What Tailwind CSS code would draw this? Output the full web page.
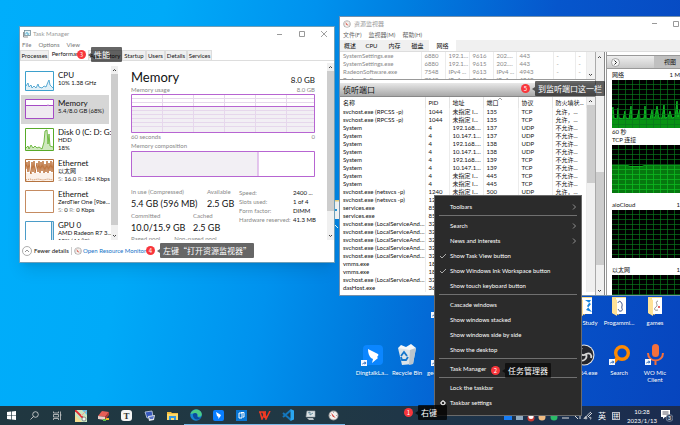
<!DOCTYPE html>
<html lang="en">
<head>
  <meta charset="UTF-8" />
  <meta name="viewport" content="width=device-width, initial-scale=1.0" />
  <title>Desktop</title>
  <script src="https://cdn.jsdelivr.net/npm/@tailwindcss/browser@4"></script>
</head>
<body class="relative h-screen overflow-hidden bg-[linear-gradient(100deg,#00aefb_0%,#00aaf8_22%,#0092ee_42%,#007ee0_54%,#0656cc_74%,#0745be_100%)] font-['Lato','Noto_Sans_CJK_SC',sans-serif] text-[6px] leading-[8px] text-[#111]">

  <!-- shared drawings -->
  <svg class="absolute size-0" aria-hidden="true">
    <defs>
      <pattern id="grid" width="7" height="5" patternUnits="userSpaceOnUse"><path d="M6.5 0V5M0 4.5H7" stroke="#08751b" stroke-width=".7" fill="none"/></pattern>
      <g id="shortcut"><rect width="6" height="6" fill="#f4f8ff"/><path d="M1.3 5C1.3 3 2.3 2.4 3.6 2.4V1.2L5.4 3 3.6 4.7V3.6C2.6 3.6 2 4 1.3 5Z" fill="#2465b8"/></g>
      <g id="gauge"><circle cx="5" cy="5" r="4.5" fill="#9b9b9b"/><circle cx="5" cy="5" r="3.6" fill="#f5f1ee"/><path d="M2.8 2.6 7 7.3 4.3 6Z" fill="#d22a20"/><path d="M5 1.6V2.6M8.2 5H7.3M2 5H2.8" stroke="#777" stroke-width=".6"/></g>
      <g id="folder"><path d="M1 1H7L8 3V19L1 17Z" fill="#e8bd55"/><path d="M2 1H15V18H2Z" fill="#f8dc88"/><path d="M5 2H15V18H5Z" fill="#fff"/><path d="M1 1 6 4V20L1 17Z" fill="#ffe297"/></g>
    </defs>
  </svg>

  <!-- desktop icons -->
  <a href="#" class="absolute left-[353px] top-[344px] flex w-[38px] flex-col items-center gap-[3px] text-white text-shadow-sm">
    <svg class="h-[22px] w-[24px]" viewBox="0 0 24 22"><rect x="3" y="1" width="20" height="20" rx="4" fill="#0b86ff"/><path d="M8 5 18 10C19 11 18 12 17 13L18 14 12 19 13 15 11 14C9 12 8 9 8 5Z" fill="#fff"/><use href="#shortcut" x="1" y="16"/></svg>
    <span>DingtalkLa...</span>
  </a>
  <a href="#" class="absolute left-[388px] top-[344px] flex w-[38px] flex-col items-center gap-[3px] text-white text-shadow-sm">
    <svg class="h-[22px] w-[20px]" viewBox="0 0 20 22"><path d="M1 4 19 4 16 20 5 21Z" fill="#dbe3e8"/><path d="M1 4 4 1 9 3 14 0 19 4 13 6Z" fill="#f4f7f9"/><path d="M13 6 19 4 16 20 12 21Z" fill="#b9c5cd"/><path d="M4 12 7 8 10 12M11 13 9 16H5L4 13" stroke="#1676cc" stroke-width="1.8" fill="none"/></svg>
    <span class="whitespace-nowrap">Recycle Bin</span>
  </a>
  <a href="#" aria-label="geek" class="absolute left-[427px] top-[312px] flex flex-col gap-[42px] text-white text-shadow-sm">
    <svg class="h-[6px] w-[10px]" viewBox="0 0 10 6"><use href="#shortcut" x="4"/></svg>
    <svg class="h-[6px] w-[10px]" viewBox="0 0 10 6"><use href="#shortcut" x="4"/></svg>
  </a>
  <span class="absolute left-[427px] top-[369px] text-white text-shadow-sm">geek</span>
  <a href="#" class="absolute left-[566px] top-[296px] flex w-[38px] flex-col items-center gap-[3px] text-white text-shadow-sm">
    <svg class="h-[20px] w-[16px]" viewBox="0 0 16 20"><use href="#folder"/><path d="M8 4 14 8 9 14 15 16 10 10 14 4Z" fill="#1685df"/></svg>
    <span class="whitespace-nowrap">My Study</span>
  </a>
  <a href="#" class="absolute left-[600px] top-[296px] flex w-[38px] flex-col items-center gap-[3px] text-white text-shadow-sm">
    <svg class="h-[20px] w-[16px]" viewBox="0 0 16 20"><use href="#folder"/><path d="M7 7C8 3 12 7 11 10S13 14 10 15 8 12 7 14" stroke="#3b5288" fill="none"/></svg>
    <span>Progammi...</span>
  </a>
  <a href="#" class="absolute left-[636px] top-[296px] flex w-[38px] flex-col items-center gap-[3px] text-white text-shadow-sm">
    <svg class="h-[20px] w-[16px]" viewBox="0 0 16 20"><use href="#folder"/><path d="M11 5C7 6 12 9 9 11S8 15 11 14" stroke="#777" stroke-width=".8" fill="none"/><circle cx="12" cy="11" r="1" fill="#d33"/></svg>
    <span>games</span>
  </a>
  <a href="#" class="absolute left-[565px] top-[344px] flex w-[38px] flex-col items-center gap-[3px] text-white text-shadow-sm">
    <svg class="h-[22px] w-[22px]" viewBox="0 0 22 22"><circle cx="11" cy="11" r="10.5" fill="#e7e7e7"/><circle cx="11" cy="11" r="9.4" fill="#24252b"/><path d="M9 4C5 9 9 13 13 10C17 8 19 11 18 14M13 10C15 15 10 18 6 16" stroke="#d5d5d5" stroke-width="1.8" fill="none"/></svg>
    <span class="whitespace-nowrap">obs64.exe</span>
  </a>
  <a href="#" class="absolute left-[600px] top-[344px] flex w-[38px] flex-col items-center gap-[3px] text-white text-shadow-sm">
    <svg class="h-[22px] w-[24px]" viewBox="0 0 24 22"><circle cx="15" cy="9" r="6.3" stroke="#ff8a00" stroke-width="3.4" fill="none"/><path d="M10.5 14 5 20" stroke="#ff8a00" stroke-width="3.6"/><use href="#shortcut" x="2" y="15"/></svg>
    <span>Search</span>
  </a>
  <a href="#" class="absolute left-[636px] top-[344px] flex w-[38px] flex-col items-center gap-[3px] text-center leading-[7px] text-white text-shadow-sm">
    <svg class="h-[22px] w-[24px]" viewBox="0 0 24 22"><rect x="9" y="0" width="7" height="13" rx="3.5" fill="#f4703c"/><path d="M5 9C5 19 20 19 20 9M12.5 16V21" stroke="#f4703c" stroke-width="2" fill="none"/><use href="#shortcut" x="2" y="15"/></svg>
    <span>WO Mic<br />Client</span>
  </a>
  <svg class="absolute left-[328px] top-[200px] h-[32px] w-[16px]" viewBox="0 0 16 32"><path d="M0 0H12V19H0Z" fill="#f5f7f8"/><path d="M0 0H12V1.500H0Z" fill="#ead27d"/><path d="M7 10H9" stroke="#259ade" stroke-width="2"/><path d="M7 25 10 28" stroke="#dff"/></svg>

  <!-- task manager -->
  <section class="absolute left-[19px] top-[26px] flex h-[237px] w-[316px] flex-col border border-[#6f9fb8] bg-white shadow-lg">
    <header class="flex h-[14px] items-center gap-[2px] pl-[3px] text-[#999]">
      <svg class="size-[8px]" viewBox="0 0 8 8"><rect x="1.500" y=".5" width="6" height="5" fill="#e5f4f8" stroke="#74909a" stroke-width=".8"/><path d="M.5 2V7H5" stroke="#777" stroke-width=".8" fill="none"/><path d="M2 4H3L4 2 5 5 6 3" stroke="#3aa1c8" stroke-width=".6" fill="none"/></svg>
      <h1 class="grow">Task Manager</h1>
      <button aria-label="Minimize" class="w-[20px]"><svg class="mx-auto size-[6px]" viewBox="0 0 6 6"><path d="M0 3.500H5" stroke="#999"/></svg></button>
      <button aria-label="Maximize" class="w-[20px]"><svg class="mx-auto size-[6px]" viewBox="0 0 6 6"><path d="M.5.5H5.500V5.500H.5Z" stroke="#999" fill="none"/></svg></button>
      <button aria-label="Close" class="w-[20px]"><svg class="mx-auto size-[6px]" viewBox="0 0 6 6"><path d="M0 0 6 6M6 0 0 6" stroke="#888" stroke-width=".8"/></svg></button>
    </header>
    <nav class="flex h-[9px] shrink-0 gap-[7px] pl-[2px] text-[#777]">
      <button>File</button><button>Options</button><button>View</button>
    </nav>
    <nav class="flex h-[12px] shrink-0 items-end border-b border-[#ddd] text-center">
      <button class="h-[10px] w-[29px] border border-b-0 border-[#ddd] bg-[#f0f0f0]">Processes</button>
      <button class="h-[12px] w-[39px] bg-white">Performance</button>
      <button class="h-[10px] w-[34px] border border-b-0 border-[#ddd] bg-[#f0f0f0]">App history</button>
      <button class="h-[10px] w-[24px] border border-b-0 border-[#ddd] bg-[#f0f0f0]">Startup</button>
      <button class="h-[10px] w-[19px] border border-b-0 border-[#ddd] bg-[#f0f0f0]">Users</button>
      <button class="h-[10px] w-[22px] border border-b-0 border-[#ddd] bg-[#f0f0f0]">Details</button>
      <button class="h-[10px] w-[25px] border border-b-0 border-[#ddd] bg-[#f0f0f0]">Services</button>
    </nav>

    <div class="flex min-h-0 grow">
      <aside class="flex w-[98px] shrink-0 overflow-hidden pt-[5px]">
        <ul class="w-[91px] overflow-hidden pt-[1px] pl-[1px] whitespace-nowrap">
          <li class="flex h-[28px] gap-[4px] pt-[4px] pl-[4px]">
            <svg class="h-[20px] w-[29px] shrink-0" viewBox="0 0 29 20"><path d="M1 19V15L3 13 4 16 6 14 7 17 9 15 11 17 13 13 14 16 17 17 19 15 21 16 23 11 24 9 25 14 28 17V19Z" fill="#e2f0f7"/><path d="M1 15 3 12 4 16 6 14 7 17 9 15 11 17 13 13 14 16 17 17 19 15 21 16 23 11 24 9 25 14 28 17" stroke="#4ba3cf" stroke-width=".9" fill="none"/><path d="M.5.5H28.500V19.500H.5Z" stroke="#3da0cc" fill="none"/></svg>
            <div><h2 class="text-[8px]">CPU</h2><p>10% 1.38 GHz</p></div>
          </li>
          <li class="mr-[2px] flex h-[29px] gap-[4px] bg-[#d6d6d6] pt-[4px] pl-[4px]">
            <svg class="h-[20px] w-[29px] shrink-0" viewBox="0 0 29 20"><path d="M.5.5H28.500V19.500H.5Z" fill="#fff"/><path d="M1 7H28V19H1Z" fill="#efeaf1"/><path d="M.5.5H28.500V19.500H.5ZM1 6.500H22L23 6 24 6.500H28" stroke="#a54bc5" fill="none"/></svg>
            <div><h2 class="text-[8px]">Memory</h2><p>5.4/8.0 GB (68%)</p></div>
          </li>
          <li class="flex h-[31px] gap-[4px] pt-[4px] pl-[4px]">
            <svg class="h-[23px] w-[29px] shrink-0" viewBox="0 0 29 23"><path d="M1 20 3 18 4 21 6 17 8 20 10 18 12 20 14 19 17 21 19 14 20 3 22 2 23 16 24 6 25 18 28 19V22H1Z" fill="#cfe8bf"/><path d="M1 20 3 18 4 21 6 17 8 20 10 18 12 20 14 19 17 21 19 14 20 3 22 2 23 16 24 6 25 18 28 19" stroke="#65b335" stroke-width=".9" fill="none"/><path d="M.5.5H28.500V22.500H.5Z" stroke="#58aa29" fill="none"/></svg>
            <div><h2 class="text-[8px]">Disk 0 (C: D: G: H:)</h2><p>HDD</p><p>18%</p></div>
          </li>
          <li class="flex h-[31px] gap-[4px] pt-[4px] pl-[4px]">
            <svg class="h-[23px] w-[29px] shrink-0" viewBox="0 0 29 23"><path d="M1 14H28V22H1Z" fill="#fbf1e9"/><path d="M1 10 2 3 3 13 4 2 5 12 6 15 7 3 8 13 9 2 10 14 12 4 13 13 14 2 15 14 16 3 17 12 18 2 19 14 20 5 21 13 22 2 23 14 24 4 25 12 26 2 27 13 28 3" stroke="#b5652a" stroke-width=".9" fill="none"/><path d="M1 21 5 20 8 21 13 20 18 21 23 20 28 21" stroke="#c98858" stroke-dasharray="1" fill="none"/><path d="M.5.5H28.500V22.500H.5Z" stroke="#b5733f" fill="none"/></svg>
            <div><h2 class="text-[8px]">Ethernet</h2><p>以太网</p><p><span class="text-[#999]">S:</span> 16.0 <span class="text-[#999]">R:</span> 184 Kbps</p></div>
          </li>
          <li class="flex h-[31px] gap-[4px] pt-[4px] pl-[4px]">
            <svg class="h-[23px] w-[29px] shrink-0" viewBox="0 0 29 23"><path d="M.5.5H28.500V22.500H.5Z" stroke="#c58b61" fill="none"/></svg>
            <div><h2 class="text-[8px]">Ethernet</h2><p>ZeroTier One [9be...</p><p><span class="text-[#999]">S:</span> 0 <span class="text-[#999]">R:</span> 0 Kbps</p></div>
          </li>
          <li class="flex h-[31px] gap-[4px] pt-[4px] pl-[4px]">
            <svg class="h-[23px] w-[29px] shrink-0" viewBox="0 0 29 23"><path d="M26 1H28V22H26Z" fill="#cfe3f0"/><path d="M.5.5H28.500V22.500H.5ZM26.500 1V22" stroke="#4b9cc8" fill="none"/></svg>
            <div><h2 class="text-[8px]">GPU 0</h2><p>AMD Radeon R7 3...</p><p>18% (44 °C)</p></div>
          </li>
        </ul>
        <div class="flex w-[7px] flex-col items-center bg-[#cdcdcd]">
          <svg class="h-[8px] w-[7px] bg-[#f0f0f0]" viewBox="0 0 7 8"><path d="M2 5 3.500 3.500 5 5" stroke="#444" fill="none"/></svg>
          <svg class="mt-auto h-[15px] w-[7px] bg-[#f0f0f0]" viewBox="0 0 7 15"><path d="M2 10 3.500 11.500 5 10" stroke="#444" fill="none"/></svg>
        </div>
      </aside>

      <main class="min-w-0 grow overflow-hidden pr-[12px] pl-[13px] whitespace-nowrap">
        <div class="flex items-end justify-between pt-[8px]">
          <h2 class="text-[13px] leading-[17px]">Memory</h2>
          <span class="text-[8px] leading-[12px]">8.0 GB</span>
        </div>
        <div class="flex justify-between text-[#888]"><span>Memory usage</span><span>8.0 GB</span></div>
        <svg class="h-[39px] w-full" viewBox="0 0 184 39" preserveAspectRatio="none">
          <path d="M0 12H184V39H0Z" fill="#f2eff4"/>
          <path d="M0 4.500H184M0 8.500H184M0 16.500H184M0 20.500H184M0 24.500H184M0 28.500H184M0 32.500H184M31.500 0V38M62.500 0V38M93.500 0V38M124.500 0V38M155.500 0V38" stroke="#e6d7ec"/>
          <path d="M.5.5H183.500V38.500H.5ZM0 12.500H184" stroke="#b765d2" fill="none"/>
        </svg>
        <div class="flex justify-between text-[#888]"><span>60 seconds</span><span>0</span></div>
        <p class="pt-[1px] pb-[1px] text-[#888]">Memory composition</p>
        <svg class="h-[26px] w-full" viewBox="0 0 184 26" preserveAspectRatio="none"><path d="M1 1H127V25H1Z" fill="#f2eff4"/><path d="M127 1V25" stroke="#dcb5e8" stroke-width="1.500"/><path d="M.5.5H183.500V25.500H.5Z" stroke="#b765d2" fill="none"/></svg>
        <div class="flex pt-[11px]">
          <div class="w-[108px] shrink-0">
            <dl class="flex">
              <div class="w-[76px]"><dt class="text-[#888]">In use (Compressed)</dt><dd class="h-[16px] text-[9px] leading-[15px]">5.4 GB (596 MB)</dd></div>
              <div><dt class="text-[#888]">Available</dt><dd class="text-[9px] leading-[15px]">2.5 GB</dd></div>
            </dl>
            <dl class="flex">
              <div class="w-[62px]"><dt class="text-[#888]">Committed</dt><dd class="h-[15px] text-[9px] leading-[15px]">10.0/15.9 GB</dd></div>
              <div><dt class="text-[#888]">Cached</dt><dd class="text-[9px] leading-[15px]">2.5 GB</dd></div>
            </dl>
            <dl class="flex gap-[14px] text-[#888]"><dt>Paged pool</dt><dt>Non-paged pool</dt></dl>
          </div>
          <dl class="grid grid-cols-[54px_auto] content-start leading-[9px]">
            <dt class="text-[#888]">Speed:</dt><dd>2400 ...</dd>
            <dt class="text-[#888]">Slots used:</dt><dd>1 of 4</dd>
            <dt class="text-[#888]">Form factor:</dt><dd>DIMM</dd>
            <dt class="text-[#888]">Hardware reserved:</dt><dd>41.3 MB</dd>
          </dl>
        </div>
      </main>
      <div class="mt-[2px] flex w-[7px] flex-col bg-[#cdcdcd]">
        <svg class="h-[8px] w-[7px] bg-[#f0f0f0]" viewBox="0 0 7 8"><path d="M2 5 3.500 3.500 5 5" stroke="#444" fill="none"/></svg>
        <svg class="mt-auto h-[29px] w-[7px] bg-[#f0f0f0]" viewBox="0 0 7 29"><path d="M2 24 3.500 25.500 5 24" stroke="#444" fill="none"/></svg>
      </div>
    </div>
    <footer class="flex h-[22px] shrink-0 items-center gap-[2px] pl-[2px]">
      <svg class="size-[10px]" viewBox="0 0 10 10"><circle cx="5" cy="5" r="4.500" stroke="#999" fill="none" stroke-width=".8"/><path d="M3 6 5 4 7 6" stroke="#777" fill="none" stroke-width=".8"/></svg>
      <button class="w-[35px] text-left whitespace-nowrap">Fewer details</button>
      <a href="#" class="flex items-center gap-[1px] border-l border-[#ccc] pl-[2px] text-[#1673c7]"><svg class="size-[8px]" viewBox="0 0 10 10"><use href="#gauge"/></svg>Open Resource Monitor</a>
    </footer>
  </section>

  <!-- resource monitor -->
  <section class="absolute top-[16px] right-0 left-[339px] flex h-[280px] flex-col overflow-hidden border border-r-0 border-[#7590ab] bg-white">
    <header class="flex h-[13px] shrink-0 items-center gap-[3px] pl-[3px] text-[#999]">
      <svg class="size-[8px]" viewBox="0 0 10 10"><use href="#gauge"/></svg>
      <h1 class="grow">资源监视器</h1>
      <button aria-label="Minimize" class="w-[18px]"><svg class="mx-auto size-[6px]" viewBox="0 0 6 6"><path d="M0 2.500H5" stroke="#999"/></svg></button>
      <button aria-label="Maximize" class="w-[13px]"><svg class="ml-[6px] size-[6px]" viewBox="0 0 6 6"><path d="M.5.5H5.500V5.500H.5Z" stroke="#999" fill="none"/></svg></button>
    </header>
    <nav class="flex h-[10px] shrink-0 gap-[7px] pl-[3px] text-[#666]">
      <button>文件(F)</button><button>监视器(M)</button><button>帮助(H)</button>
    </nav>
    <nav class="flex h-[12px] shrink-0 border-b border-[#ddd] bg-[#f0f0f0]">
      <button class="w-[20px]">概述</button><button class="w-[23px]">CPU</button><button class="w-[23px]">内存</button><button class="w-[23px]">磁盘</button><button class="w-[27px] bg-white">网络</button>
    </nav>

    <div class="flex min-h-0 grow">
      <div class="w-[256px] shrink-0 overflow-hidden border-r border-[#aaa]">
        <div class="flex h-[28px] overflow-hidden border-b border-[#999]">
          <table class="w-[247px] table-fixed self-start text-[#888]">
            <colgroup><col class="w-[81px]" /><col class="w-[24px]" /><col class="w-[24px]" /><col class="w-[24px]" /><col class="w-[23px]" /><col class="w-[37px]" /><col class="w-[22px]" /><col /></colgroup>
            <tbody id="conns"></tbody>
          </table>
          <div class="flex grow flex-col justify-end bg-[#f2f2f2]"><svg class="h-[8px] w-[7px]" viewBox="0 0 7 8"><path d="M2 3 3.500 4.500 5 3" stroke="#444" fill="none"/></svg></div>
        </div>
        <h2 class="mt-[3px] h-[14px] border-b border-[#888] bg-linear-to-b from-[#e8e8e8] to-[#a9a9a9] pl-[3px] text-[8px] leading-[14px]">侦听端口</h2>
        <div class="flex">
          <table class="w-[247px] table-fixed">
            <colgroup><col class="w-[85px]" /><col class="w-[24px]" /><col class="w-[34px]" /><col class="w-[35px]" /><col class="w-[34px]" /><col /></colgroup>
            <thead>
              <tr class="h-[11px] text-left *:border-r *:border-[#e4e4e4] *:pl-[3px] *:font-normal">
                <th>名称</th><th>PID</th><th>地址</th><th class="relative">端口<svg class="absolute top-0 left-[14px] size-[4px]" viewBox="0 0 4 4"><path d="M0 3 2 1 4 3" stroke="#777" stroke-width=".7" fill="none"/></svg></th><th>协议</th><th>防火墙状...</th>
              </tr>
            </thead>
            <tbody id="ports"></tbody>
          </table>
          <div class="flex grow flex-col bg-[#f0f0f0]">
            <svg class="h-[8px] w-[7px]" viewBox="0 0 7 8"><path d="M2 5 3.500 3.500 5 5" stroke="#444" fill="none"/></svg>
            <div class="h-[78px] bg-[#cdcdcd]"></div>
          </div>
        </div>
      </div>
      <div class="flex w-[9px] shrink-0 flex-col border-r border-[#888] bg-[#f0f0f0]">
        <svg class="mt-[1px] h-[8px] w-[7px]" viewBox="0 0 7 8"><path d="M2 5 3.500 3.500 5 5" stroke="#444" fill="none"/></svg>
        <div class="mt-[111px] h-[93px] bg-[#cdcdcd]"></div>
        <svg class="mt-auto h-[8px] w-[7px]" viewBox="0 0 7 8"><path d="M2 3 3.500 4.500 5 3" stroke="#444" fill="none"/></svg>
      </div>
      <aside class="ml-px min-w-0 grow overflow-hidden border-l border-[#999] pt-[3px]">
        <div class="flex h-[14px] items-center justify-between border-y border-[#999] bg-linear-to-b from-[#eee] to-[#c9c9c9] pl-[4px]">
          <button aria-label="Expand"><svg class="size-[9px]" viewBox="0 0 9 9"><circle cx="4.500" cy="4.500" r="4" fill="#f5f5f5" stroke="#888" stroke-width=".7"/><path d="M3.500 2.500 5.500 4.500 3.500 6.500" stroke="#222" fill="none"/></svg></button>
          <button class="h-[12px] w-[26px] bg-[#c0c0c0] pl-[6px]">视图</button>
        </div>
        <div class="pl-[5px] whitespace-nowrap">
          <div class="flex h-[11px] items-center justify-between"><h3>网络</h3><span>1 M</span></div>
          <svg class="h-[48px] w-full bg-black" viewBox="0 0 68 48" preserveAspectRatio="none"><path d="M0 48V30L1 27 2 38 5 39 6 28 7 38 11 39 13 31 14 38 17 39 19 26 20 39 25 38 27 30 28 39 32 38 33 26 34 38 38 39 40 30 41 38 43 37 45 26 47 38 50 38 52 25 53 38 56 37 58 31 60 38 63 37 65 21 66 37 68 29V48Z" fill="#079313"/><path d="M0 30 1 27 2 38 5 39 6 28 7 38 11 39 13 31 14 38 17 39 19 26 20 39 25 38 27 30 28 39 32 38 33 26 34 38 38 39 40 30 41 38 43 37 45 26 47 38 50 38 52 25 53 38 56 37 58 31 60 38 63 37 65 21 66 37 68 29" fill="none" stroke="#12d12b" stroke-width=".8"/><rect width="68" height="48" fill="url(#grid)"/></svg>
          <p>60 秒</p>
          <h3 class="h-[9px]">TCP 连接</h3>
          <svg class="h-[48px] w-full bg-black" viewBox="0 0 68 48" preserveAspectRatio="none"><path d="M0 21H68V48H0Z" fill="#06780f"/><rect width="68" height="48" fill="url(#grid)"/><path d="M0 20.500H16L18 21.500H30L32 20.500H68M0 24.500H68M0 29.500H68M0 34.500H68M0 39.500H68M0 44.500H68M6.500 21V48M13.500 21V48M20.500 21V48M27.500 21V48M34.500 21V48M41.500 21V48M48.500 21V48M55.500 21V48M62.500 21V48" stroke="#0cb91e" stroke-width=".8" fill="none"/></svg>
          <div class="flex h-[17px] items-end justify-between pb-[1px]"><h3>aioCloud</h3><span>1</span></div>
          <svg class="h-[48px] w-full bg-black"><rect width="100%" height="48" fill="url(#grid)"/></svg>
          <div class="flex h-[17px] items-end justify-between pb-[1px]"><h3>以太网</h3><span>1</span></div>
          <svg class="h-[48px] w-full bg-black"><rect width="100%" height="48" fill="url(#grid)"/></svg>
        </div>
      </aside>
    </div>
  </section>

  <!-- taskbar -->
  <footer class="absolute inset-x-0 bottom-0 flex h-[19px] items-stretch bg-linear-to-r from-[#203740] via-[#203845] to-[#1b2c50] text-white">
    <div class="flex *:flex *:w-[23px] *:items-center *:justify-center">
      <button aria-label="Start"><svg class="size-[9px]" viewBox="0 0 9 9"><path d="M0 1 4 .5V4.200H0ZM4.700.4 9 0V4.200H4.700ZM0 4.800H4V8.400L0 8ZM4.700 4.800H9V9L4.700 8.500Z" fill="#fff"/></svg></button>
      <button aria-label="Search"><svg class="size-[9px]" viewBox="0 0 9 9"><circle cx="5.500" cy="3.500" r="2.800" stroke="#ddd" stroke-width=".8" fill="none"/><path d="M3.500 5.500.5 8.500" stroke="#ddd" stroke-width=".8"/></svg></button>
      <button aria-label="Task view"><svg class="size-[9px]" viewBox="0 0 9 9"><path d="M.5.500V2H5.500V.500M.5 3.500H5.500V6H.5ZM.5 9V7.500H5.500V9M7.500.500V9M7 4H8.500" stroke="#ccc" stroke-width=".8" fill="none"/></svg></button>
      <button aria-label="Maps"><svg class="size-[12px]" viewBox="0 0 12 12"><path d="M0 0H12V12H0Z" fill="#c9e5c2"/><path d="M7 0H12V5Z" fill="#65bee5"/><path d="M0 5 7 12H0Z" fill="#f6dd91"/><path d="M0 0 8 8" stroke="#e32b35" stroke-width="1.800"/><path d="M6 6 11 1" stroke="#f3a18e"/><circle cx="9" cy="9" r="2" fill="#f5f5f5" stroke="#555" stroke-width=".6"/></svg></button>
      <button aria-label="Eraser"><svg class="size-[12px]" viewBox="0 0 12 12"><path d="M4 1 11 2 7 7 0 6Z" fill="#e65e57"/><path d="M0 6 7 7V10L0 9Z" fill="#eecfca"/><path d="M7 7 11 2V5L7 10Z" fill="#b43b38"/><path d="M5 10H8" stroke="#5bc04b" stroke-width="2"/><path d="M8 9H11" stroke="#efb72e" stroke-width="2"/></svg></button>
      <button aria-label="Typora"><span class="flex size-[11px] items-center justify-center rounded-[3px] bg-[#f5f5f5] font-['Liberation_Serif',serif] text-[9px] font-bold text-[#333]">T</span></button>
      <button aria-label="Remote"><svg class="size-[12px]" viewBox="0 0 12 12"><path d="M1 2 8 1 9 7 3 8Z" fill="#3557bb" stroke="#c4d0e6" stroke-width=".8"/><path d="M4 6 11 5 10 10 5 11Z" fill="#dbe1ec"/><path d="M5 7 10 6 9 9 6 9Z" fill="#5874c8"/></svg></button>
      <button aria-label="Explorer"><svg class="h-[10px] w-[11px]" viewBox="0 0 11 10"><path d="M0 1H4L5 2H11V9H0Z" fill="#f3bd3e"/><path d="M0 3H11V9H0Z" fill="#ffd968"/><path d="M2 5H9V9H7V7H4V9H2Z" fill="#3698df"/></svg></button>
      <button aria-label="Edge" class="border-b border-[#77b9e8]"><svg class="size-[12px]" viewBox="0 0 12 12"><circle cx="6" cy="6" r="5.800" fill="#1686d2"/><path d="M.5 5C2-1 11-1 11.800 5 12 8 9 8 7.500 7.500 9 5 6 3 .5 5Z" fill="#4acb87"/><path d="M3 5C5 3 8 4 7 7 8 9 10 9 11 8 8 13 2 10 3 5Z" fill="#0c4b9c"/></svg></button>
      <button aria-label="DingTalk" class="border-b border-[#77b9e8]"><svg class="size-[11px]" viewBox="0 0 11 11"><rect width="11" height="11" rx="2" fill="#087eff"/><path d="M3 2 8 5 7 7 5 9 5.500 7 4 6Z" fill="#fff"/></svg></button>
      <button aria-label="Notes" class="border-b border-[#77b9e8]"><svg class="size-[11px]" viewBox="0 0 11 11"><rect width="11" height="11" fill="#0876d4"/><path d="M3 3H6V8H3ZM5 2.500H8V7H7" fill="none" stroke="#fff"/></svg></button>
      <button aria-label="WPS" class="border-b border-[#77b9e8]"><svg class="h-[9px] w-[12px]" viewBox="0 0 12 9"><path d="M0 1H7M1 1 3 8 6 2 7 8 11 0M4 1 6 7" stroke="#f13a24" stroke-width="1.500" fill="none"/></svg></button>
      <button aria-label="VS Code" class="border-b border-[#77b9e8]"><svg class="size-[12px]" viewBox="0 0 12 12"><path d="M9 1 1 8M1 4 9 11" stroke="#1477bd" stroke-width="2"/><path d="M8.500 0 12 1.500V10.500L8.500 12Z" fill="#2aa7ef"/></svg></button>
      <button aria-label="Device" class="border-b border-[#77b9e8]"><svg class="size-[11px]" viewBox="0 0 11 11"><path d="M2 1H10V7H1Z" fill="#dce3e5" stroke="#99a3a7" stroke-width=".6"/><path d="M3 3 5 2 5 5 8 3" stroke="#648d9e" fill="none"/><path d="M2 8H8L9 10H4Z" fill="#b7c0c5"/></svg></button>
      <button aria-label="Resource Monitor" class="border-b border-[#77b9e8]"><svg class="size-[11px]" viewBox="0 0 10 10"><use href="#gauge"/></svg></button>
    </div>
    <div class="ml-auto flex items-center">
      <svg class="mt-[4px] h-[10px] w-[80px]" viewBox="0 0 80 10"><path d="M2 0H10V7H2Z" fill="#167cf5"/><path d="M14 0H21V7H14Z" fill="#92abc0"/><circle cx="29" cy="5" r="3.500" fill="#c93931"/><circle cx="29" cy="3.500" r="2.500" fill="#fff"/><circle cx="40" cy="4" r="3.500" fill="#f0bc83"/><circle cx="52" cy="4" r="3.500" fill="#2bbb68"/><path d="M60 5H67M72 2 76 6M78 2V6" stroke="#ddd"/></svg>
      <svg class="ml-[1px] h-[10px] w-[10px]" viewBox="0 0 10 10"><path d="M1 8C3 3 5 8 3 8S3 5 8 1M5 6 9 2M6 7C8 5 9 8 7 8" stroke="#eee" stroke-width=".9" fill="none"/></svg>
      <button class="ml-[5px] text-[8px]">英</button>
      <button class="ml-[6px] border border-white/70 leading-[6px]">拼</button>
      <time class="ml-[5px] w-[34px] text-center leading-[9px]">10:28<br />2023/1/13</time>
      <button aria-label="Notifications" class="mr-[7px] ml-[2px]"><svg class="h-[13px] w-[12px]" viewBox="0 0 12 13"><path d="M0 1H9V8H4L2 10V8H0Z" fill="#fff"/><path d="M1.500 3H7.500M1.500 5H7.500" stroke="#334" stroke-width=".8"/><circle cx="8.500" cy="9" r="3.500" fill="#31415c" stroke="#91a0b4" stroke-width=".6"/><text x="7" y="11" font-size="5" fill="#fff">3</text></svg></button>
    </div>
  </footer>

  <!-- taskbar context menu -->
  <div role="menu" class="absolute top-[195px] left-[434px] w-[148px] border border-[#6a6a6a] bg-[#2b2b2b] pt-[3px] pb-[5px] text-white *:[button]:flex *:[button]:h-[15px] *:[button]:w-full *:[button]:items-center *:[button]:pl-[15px] *:[hr]:mx-[4px] *:[hr]:mt-[1px] *:[hr]:mb-[2px] *:[hr]:border-[#707070]">
    <button role="menuitem"><span class="grow text-left">Toolbars</span><svg class="mr-[4px] size-[6px]" viewBox="0 0 6 6"><path d="M2 .5 4.500 3 2 5.500" stroke="#aaa" stroke-width=".8" fill="none"/></svg></button>
    <hr />
    <button role="menuitem"><span class="grow text-left">Search</span><svg class="mr-[4px] size-[6px]" viewBox="0 0 6 6"><path d="M2 .5 4.500 3 2 5.500" stroke="#aaa" stroke-width=".8" fill="none"/></svg></button>
    <button role="menuitem"><span class="grow text-left">News and interests</span><svg class="mr-[4px] size-[6px]" viewBox="0 0 6 6"><path d="M2 .5 4.500 3 2 5.500" stroke="#aaa" stroke-width=".8" fill="none"/></svg></button>
    <button role="menuitem"><svg class="mr-[4px] -ml-[10px] size-[6px]" viewBox="0 0 6 6"><path d="M0 3 2 5 6 1" stroke="#ccc" stroke-width=".8" fill="none"/></svg>Show Task View button</button>
    <button role="menuitem"><svg class="mr-[4px] -ml-[10px] size-[6px]" viewBox="0 0 6 6"><path d="M0 3 2 5 6 1" stroke="#ccc" stroke-width=".8" fill="none"/></svg>Show Windows Ink Workspace button</button>
    <button role="menuitem">Show touch keyboard button</button>
    <hr />
    <button role="menuitem">Cascade windows</button>
    <button role="menuitem">Show windows stacked</button>
    <button role="menuitem">Show windows side by side</button>
    <button role="menuitem">Show the desktop</button>
    <hr />
    <button role="menuitem">Task Manager</button>
    <hr />
    <button role="menuitem">Lock the taskbar</button>
    <button role="menuitem"><svg class="mr-[4px] -ml-[10px] size-[6px]" viewBox="0 0 6 6"><circle cx="3" cy="3" r="1.800" stroke="#eee" fill="none"/><path d="M3 0V1M3 5V6M0 3H1M5 3H6M1 1 1.500 1.500M5 5 4.500 4.500M5 1 4.500 1.500M1 5 1.500 4.500" stroke="#eee"/></svg>Taskbar settings</button>
  </div>

  <!-- numbered callouts -->
  <div lang="zh-CN" class="absolute top-[405px] left-[404px] flex items-center font-['Noto_Sans_CJK_SC',sans-serif] text-[8px] text-white">
    <b class="flex size-[9px] items-center justify-center rounded-full bg-[#f8363b] text-[6px] font-normal">1</b>
    <i class="ml-[2px] border-y-2 border-r-3 border-y-transparent border-r-black/75"></i>
    <span class="rounded-[1px] bg-black/75 pr-[10px] pl-[3px] leading-[15px]">右键</span>
  </div>
  <div lang="zh-CN" class="absolute top-[363px] left-[491px] flex items-center font-['Noto_Sans_CJK_SC',sans-serif] text-[8px] text-white">
    <b class="flex size-[9px] items-center justify-center rounded-full bg-[#f8363b] text-[6px] font-normal">2</b>
    <i class="ml-[2px] border-y-2 border-r-3 border-y-transparent border-r-black/60"></i>
    <span class="rounded-[1px] bg-black/60 pr-[3px] pl-[3px] leading-[15px]">任务管理器</span>
  </div>
  <div lang="zh-CN" class="absolute top-[47px] left-[77px] flex items-center font-['Noto_Sans_CJK_SC',sans-serif] text-[8px] text-white">
    <b class="flex size-[9px] items-center justify-center rounded-full bg-[#f8363b] text-[6px] font-normal">3</b>
    <i class="ml-[2px] border-y-2 border-r-3 border-y-transparent border-r-black/60"></i>
    <span class="rounded-[1px] bg-black/60 pr-[12px] pl-[3px] leading-[15px]">性能</span>
  </div>
  <div lang="zh-CN" class="absolute top-[243px] left-[146px] flex items-center font-['Noto_Sans_CJK_SC',sans-serif] text-[8px] text-white">
    <b class="flex size-[9px] items-center justify-center rounded-full bg-[#f8363b] text-[6px] font-normal">4</b>
    <i class="ml-[2px] border-y-2 border-r-3 border-y-transparent border-r-black/60"></i>
    <span class="rounded-[1px] bg-black/60 pr-[3px] pl-[3px] leading-[15px]">左键“打开资源监视器”</span>
  </div>
  <div lang="zh-CN" class="absolute top-[81px] left-[521px] flex items-center font-['Noto_Sans_CJK_SC',sans-serif] text-[8px] text-white">
    <b class="flex size-[9px] items-center justify-center rounded-full bg-[#f8363b] text-[6px] font-normal">5</b>
    <i class="ml-[2px] border-y-2 border-r-3 border-y-transparent border-r-black/60"></i>
    <span class="rounded-[1px] bg-black/60 pr-[3px] pl-[3px] leading-[15px]">到监听端口这一栏</span>
  </div>

  <script>
    const conns = [
      ["SystemSettings.exe", "6880", "192.1...", "9616", "202.8...", "443", "-", "-"],
      ["SystemSettings.exe", "6880", "192.1...", "9615", "202.8...", "443", "-", "-"],
      ["RadeonSoftware.exe", "7548", "IPv4 ...", "9613", "IPv4 ...", "4943", "-", "-"],
      ["RadeonSoftware.exe", "7548", "IPv4 ...", "9618", "IPv4 ...", "4943", "-", "-"],
    ];
    const ports = [
      ["svchost.exe (RPCSS -p)", 1044, "未指定 I...", 135, "TCP", "允许，..."],
      ["svchost.exe (RPCSS -p)", 1044, "未指定 I...", 135, "TCP", "允许，..."],
      ["System", 4, "192.168.0...", 137, "UDP", "不允许..."],
      ["System", 4, "10.147.19...", 137, "UDP", "不允许..."],
      ["System", 4, "192.168.0...", 138, "UDP", "不允许..."],
      ["System", 4, "10.147.19...", 138, "UDP", "不允许..."],
      ["System", 4, "192.168.0...", 139, "TCP", "不允许..."],
      ["System", 4, "10.147.19...", 139, "TCP", "不允许..."],
      ["System", 4, "未指定 I...", 445, "TCP", "不允许..."],
      ["System", 4, "未指定 I...", 445, "TCP", "不允许..."],
      ["svchost.exe (netsvcs -p)", 1240, "未指定 I...", 500, "UDP", "允许，..."],
      ["svchost.exe (netsvcs -p)", 1240],
      ["services.exe", 856],
      ["services.exe", 856],
      ["svchost.exe (LocalServiceAndNo...", 3256],
      ["svchost.exe (LocalServiceAndNo...", 3256],
      ["svchost.exe (LocalServiceAndNo...", 3256],
      ["svchost.exe (LocalServiceAndNo...", 3256],
      ["svchost.exe (LocalServiceAndNo...", 3256],
      ["vmms.exe", 1848],
      ["vmms.exe", 1848],
      ["svchost.exe (LocalServiceAndNo...", 3256],
      ["dasHost.exe", 3672],
    ];

    function fill(id, rows, cols) {
      document.getElementById(id).innerHTML = rows.map(row => {
        let cells = "";
        for (let i = 0; i < cols; i++) {
          cells += `<td class="h-[8px] truncate border-r border-[#ececec] pl-[3px]">${row[i] ?? ""}</td>`;
        }
        return `<tr>${cells}</tr>`;
      }).join("");
    }

    fill("conns", conns, 8);
    fill("ports", ports, 6);
  </script>
</body>
</html>
